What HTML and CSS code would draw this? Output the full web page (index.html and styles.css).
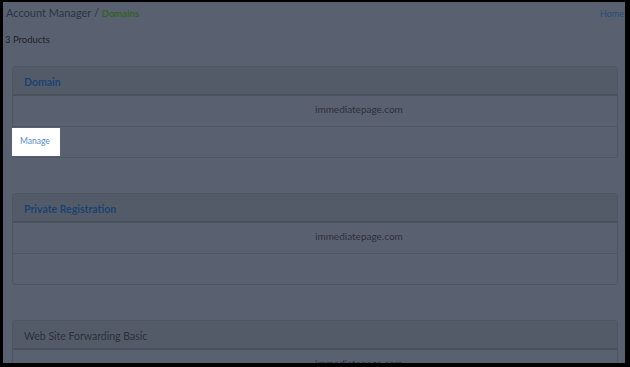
FILE: index.html
```html
<!DOCTYPE html>
<html>
<head>
<meta charset="utf-8">
<link rel="stylesheet" href="styles.css">
</head>
<body>
<div class="screen">
  <div class="topbar">
    <div class="crumbs"><span class="crumb-main">Account Manager / </span><span class="crumb-current">Domains</span></div>
    <a class="home">Home</a>
  </div>
  <div class="count">3 Products</div>
  <div class="cards">
    <div class="card">
      <div class="card-head blue">Domain</div>
      <div class="row"><div class="cell"></div><div class="cell">immediatepage.com</div></div>
      <div class="row last"><div class="cell"><a class="manage">Manage</a></div><div class="cell"></div></div>
    </div>
    <div class="card">
      <div class="card-head blue">Private Registration</div>
      <div class="row"><div class="cell"></div><div class="cell">immediatepage.com</div></div>
      <div class="row last"><div class="cell"></div><div class="cell"></div></div>
    </div>
    <div class="card">
      <div class="card-head plain">Web Site Forwarding Basic</div>
      <div class="row"><div class="cell"></div><div class="cell">immediatepage.com</div></div>
      <div class="row last"><div class="cell"></div><div class="cell"></div></div>
    </div>
  </div>
</div>
</body>
</html>
```
FILE: styles.css
```css
html, body {
  margin: 0;
  padding: 0;
  background: #000;
}
body {
  padding: 2px 5px 4px 3px;
  font-family: Lato, "Open Sans", sans-serif;
}
.screen {
  height: 361px;
  overflow: hidden;
  background: #596070;
  display: flex;
  flex-direction: column;
}
.topbar {
  display: flex;
  justify-content: space-between;
  align-items: baseline;
  padding: 2px 1px 0 3px;
  height: 20px;
  line-height: 13px;
}
.crumb-main {
  font-size: 11px;
  color: #2a3647;
}
.crumb-current {
  font-size: 9.5px;
  font-weight: bold;
  color: #356226;
}
.home {
  font-size: 9px;
  color: #274c7a;
}
.count {
  font-size: 9.5px;
  line-height: 12px;
  color: #1e232b;
  padding: 14px 0 0 2px;
}
.cards {
  display: flex;
  flex-direction: column;
  gap: 35px;
  margin: 20px 7px 0 9px;
}
.card {
  border: 1px solid #4f5663;
  border-radius: 3px;
  flex: none;
}
.card-head {
  height: 27px;
  line-height: 30px;
  padding-left: 11px;
  background: #545b68;
  border-bottom: 2px solid #4a505c;
  font-size: 10.5px;
}
.card-head.blue {
  color: #1b4371;
  font-weight: bold;
}
.card-head.plain {
  color: #2b313b;
}
.row {
  display: grid;
  grid-template-columns: 1fr 1fr;
  height: 30px;
  border-bottom: 1px solid #4f5663;
}
.row.last {
  border-bottom: none;
}
.cell {
  font-size: 10px;
  color: #2c323c;
  line-height: 27px;
}
.manage {
  display: inline-block;
  background: #fff;
  color: #5a8ec6;
  font-size: 8.5px;
  height: 28px;
  line-height: 27px;
  width: 40px;
  padding-left: 8px;
  margin-left: -1px;
}
```
